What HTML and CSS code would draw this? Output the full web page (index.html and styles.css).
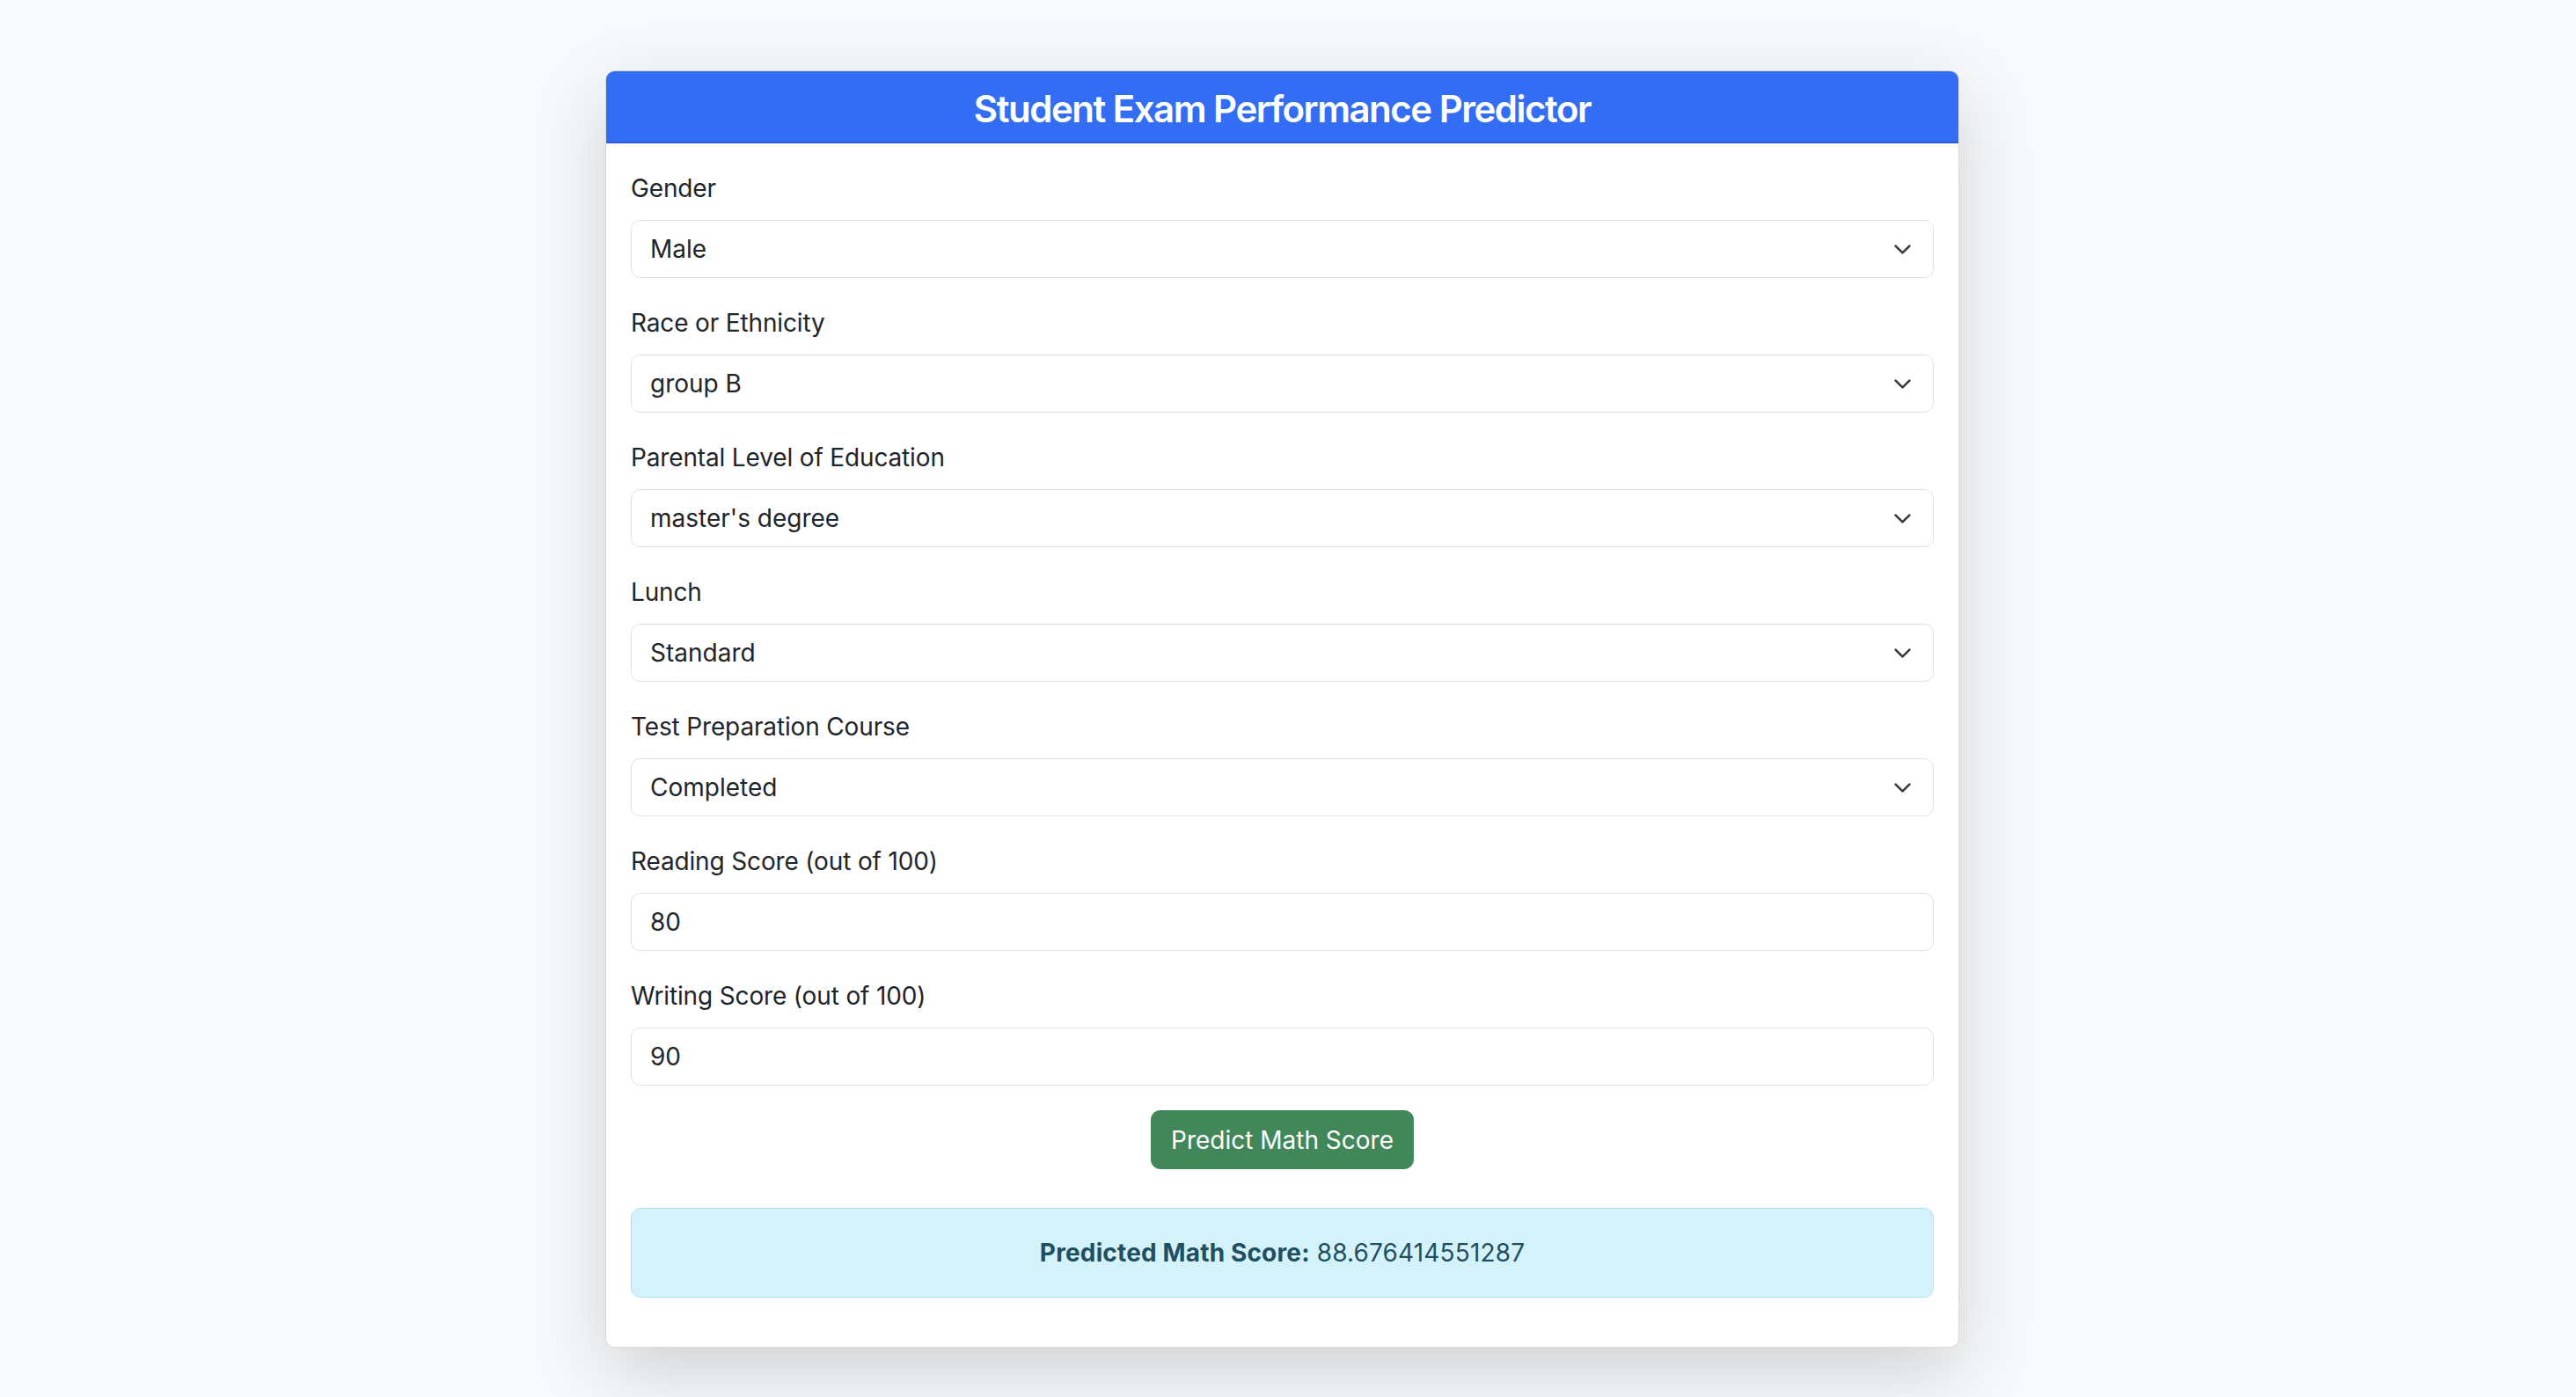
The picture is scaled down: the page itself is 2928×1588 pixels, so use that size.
FILE: index.html
```html
<!DOCTYPE html>
<html lang="en">
<head>
<meta charset="utf-8">
<title>Student Exam Performance Predictor</title>
<link rel="stylesheet" href="styles.css">
</head>
<body>
<main class="page">
  <section class="card">
    <header class="card-header">
      <h4 class="card-title">Student Exam Performance Predictor</h4>
    </header>
    <div class="card-body">
      <form class="form">
        <div class="field">
          <label class="label">Gender</label>
          <div class="select-wrap">
            <select class="control select"><option>Male</option><option>Female</option></select>
            <svg class="chevron" viewBox="0 0 16 16"><path d="M2 5l6 6 6-6"/></svg>
          </div>
        </div>
        <div class="field">
          <label class="label">Race or Ethnicity</label>
          <div class="select-wrap">
            <select class="control select"><option>group B</option></select>
            <svg class="chevron" viewBox="0 0 16 16"><path d="M2 5l6 6 6-6"/></svg>
          </div>
        </div>
        <div class="field">
          <label class="label">Parental Level of Education</label>
          <div class="select-wrap">
            <select class="control select"><option>master's degree</option></select>
            <svg class="chevron" viewBox="0 0 16 16"><path d="M2 5l6 6 6-6"/></svg>
          </div>
        </div>
        <div class="field">
          <label class="label">Lunch</label>
          <div class="select-wrap">
            <select class="control select"><option>Standard</option></select>
            <svg class="chevron" viewBox="0 0 16 16"><path d="M2 5l6 6 6-6"/></svg>
          </div>
        </div>
        <div class="field">
          <label class="label">Test Preparation Course</label>
          <div class="select-wrap">
            <select class="control select"><option>Completed</option></select>
            <svg class="chevron" viewBox="0 0 16 16"><path d="M2 5l6 6 6-6"/></svg>
          </div>
        </div>
        <div class="field">
          <label class="label">Reading Score (out of 100)</label>
          <input class="control" type="text" value="80">
        </div>
        <div class="field">
          <label class="label">Writing Score (out of 100)</label>
          <input class="control" type="text" value="90">
        </div>
        <div class="actions">
          <button class="btn" type="button">Predict Math Score</button>
        </div>
      </form>
      <div class="alert"><strong>Predicted Math Score:</strong> 88.676414551287</div>
    </div>
  </section>
</main>
</body>
</html>
```

FILE: styles.css
```css
* { box-sizing: border-box; }

html, body {
  margin: 0;
  padding: 0;
  background: #f8f9fa;
}

body {
  font-family: "Inter", "Noto Sans", "Liberation Sans", sans-serif;
  color: #212529;
  font-size: 28px;
  line-height: 42px;
}

.page {
  display: flex;
  justify-content: center;
  padding: 80px 13px 60px 0;
}

.card {
  width: 1539px;
  background: #fff;
  border: 1px solid rgba(0, 0, 0, 0.14);
  border-radius: 10.5px;
  box-shadow: 0 28px 84px rgba(0, 0, 0, 0.16);
  overflow: hidden;
}

.card-header {
  background: #336df3;
  color: #fff;
  padding: 18px 28px 12px;
  border-bottom: 2px solid #2c5fd6;
  text-align: center;
}

.card-title {
  margin: 0;
  font-size: 42px;
  line-height: 50px;
  font-weight: 600;
  letter-spacing: -1.5px;
}

.card-body {
  padding: 28px;
}

.form {
  margin: 0;
}

.field {
  margin-bottom: 28px;
}

.label {
  display: block;
  font-size: 28px;
  line-height: 42px;
  padding-top: 2px;
  margin-bottom: 15px;
  color: #212529;
  letter-spacing: -0.15px;
}

.select-wrap {
  position: relative;
}

.control {
  display: block;
  width: 100%;
  height: 66px;
  padding: 0 21px;
  font-family: inherit;
  font-size: 28px;
  line-height: 42px;
  color: #212529;
  background: #fff;
  border: 1px solid #dee2e6;
  border-radius: 10.5px;
  outline: none;
  -webkit-appearance: none;
  appearance: none;
}

.select {
  padding-right: 70px;
}

.chevron {
  position: absolute;
  right: 25px;
  top: 50%;
  width: 21px;
  height: 21px;
  margin-top: -10.5px;
  fill: none;
  stroke: #343a40;
  stroke-width: 2;
  stroke-linecap: round;
  stroke-linejoin: round;
  pointer-events: none;
}

.actions {
  display: flex;
  justify-content: center;
}

.btn {
  height: 67px;
  padding: 0 22px;
  font-family: inherit;
  font-size: 28px;
  line-height: 42px;
  color: #fff;
  background: #42875a;
  border: 1px solid #42875a;
  border-radius: 10.5px;
}

.alert {
  margin-top: 44px;
  margin-bottom: 28px;
  padding: 29px 28px;
  background: #d4f2fa;
  border: 1px solid #a6e5f5;
  border-radius: 10.5px;
  color: #1f4f60;
  text-align: center;
  font-size: 28px;
  line-height: 42px;
  letter-spacing: 0.15px;
}

.alert strong {
  font-weight: 700;
}
```
